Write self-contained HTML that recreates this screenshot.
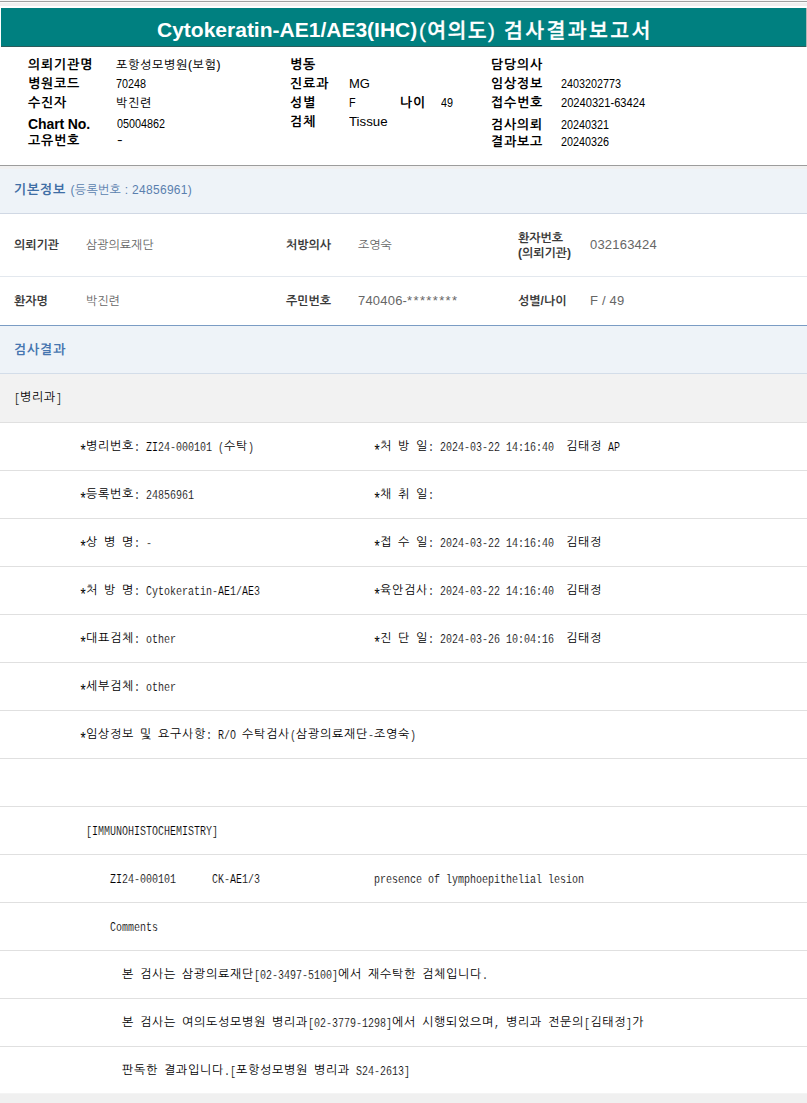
<!DOCTYPE html>
<html lang="ko">
<head>
<meta charset="utf-8">
<title>검사결과보고서</title>
<style>
html,body{margin:0;padding:0;}
body{width:807px;height:1103px;position:relative;overflow:hidden;background:#f0f0f0;font-family:"Liberation Sans","NanumGothic","Noto Sans CJK KR",sans-serif;}
#topline{position:absolute;left:0;top:0;width:807px;height:1px;background:#f6f6f6;}
#topline2{position:absolute;left:0;top:1px;width:807px;height:1px;background:#a0a0a0;}
#topline3{position:absolute;left:0;top:2px;width:807px;height:1px;background:#fafafa;}
#topw{position:absolute;left:0;top:6px;width:807px;height:42px;background:#fff;}
#redge{position:absolute;left:806px;top:8px;width:1px;height:39px;background:#b4b4b4;}
#hdr{position:absolute;left:1px;top:8px;width:805px;height:38px;background:#008080;border-bottom:1px solid #2c5c5c;color:#fff;text-align:center;font-weight:bold;font-size:22px;line-height:38px;white-space:nowrap;font-family:"Liberation Sans","Noto Sans CJK KR",sans-serif;}
#hdr span{position:absolute;top:0;}
#hdr .k1,#hdr .k2{font-weight:500;-webkit-text-stroke:.3px #fff;}
#hdr .e{left:156px;font-size:21px;top:3px;}
#hdr .k1{left:418px;font-size:20.5px;letter-spacing:1.4px;top:4px;}
#hdr .k2{left:503px;font-size:20.5px;letter-spacing:2.4px;top:4px;}
#info{position:absolute;left:0;top:47px;width:807px;height:118px;background:#fff;border-bottom:1px solid #9c9c9c;}
#info div{position:absolute;white-space:nowrap;line-height:16px;height:16px;color:#000;}
#info .l{font-weight:bold;font-size:13px;letter-spacing:.8px;}
#info .v{font-size:13px;transform:scaleX(.83);transform-origin:0 0;}
#info .v.k{font-size:12px;letter-spacing:.7px;transform:none;-webkit-text-stroke:.1px #000;}
.sec{position:absolute;left:0;width:807px;background:#eef3f8;}
.sec b{position:absolute;left:14px;font-size:13px;color:#3e6ea5;white-space:nowrap;letter-spacing:.8px;}
.sec span{font-weight:normal;font-size:12px;color:#5a7fae;letter-spacing:.3px;}
.row{position:absolute;left:0;width:807px;background:#fff;}
.row div{position:absolute;white-space:nowrap;font-size:12px;}
.row .l{font-weight:bold;color:#3a3a3a;}
.row .v{color:#666;}
.row .n{font-size:13px;letter-spacing:.2px;margin-top:-1px;}
.m{position:absolute;left:0;width:807px;height:47px;background:#fff;border-bottom:1px solid #e0e0e0;}
.m div{position:absolute;top:0;line-height:47px;white-space:pre;font-size:12px;letter-spacing:.72px;color:#000;font-family:"NanumGothic","Noto Sans CJK KR",sans-serif;}
.m .a{display:inline-block;font-family:"Liberation Mono","DejaVu Sans Mono",monospace;font-size:13px;letter-spacing:0;transform:scaleX(.769);transform-origin:0 50%;white-space:pre;line-height:16px;position:relative;top:1px;-webkit-text-stroke:.15px #fff;}
.m .s{font-size:17px;transform:scaleX(.8);top:6px;left:-1px;-webkit-text-stroke:0;}
</style>
</head>
<body>
<div id="topline"></div><div id="topline2"></div><div id="topline3"></div><div id="topw"></div><div id="redge"></div>
<div id="hdr"><span class="e">Cytokeratin-AE1/AE3(IHC)</span><span class="k1">(여의도)</span> <span class="k2">검사결과보고서</span></div>
<div id="info">
<div class="l" style="left:28px;top:10px">의뢰기관명</div><div class="v k" style="left:116px;top:10px">포항성모병원(보험)</div>
<div class="l" style="left:28px;top:29px">병원코드</div><div class="v" style="left:116px;top:29px">70248</div>
<div class="l" style="left:28px;top:48px">수진자</div><div class="v k" style="left:116px;top:48px">박진련</div>
<div class="l" style="left:28px;top:69px;font-size:14px;letter-spacing:-.1px">Chart No.</div><div class="v" style="left:117px;top:69px">05004862</div>
<div class="l" style="left:28px;top:86px">고유번호</div><div class="v" style="left:117px;top:85px;transform:scaleX(1.3)">-</div>
<div class="l" style="left:290px;top:10px">병동</div>
<div class="l" style="left:290px;top:29px">진료과</div><div class="v" style="left:349px;top:29px;transform:none">MG</div>
<div class="l" style="left:290px;top:48px">성별</div><div class="v" style="left:349px;top:48px">F</div>
<div class="l" style="left:400px;top:48px">나이</div><div class="v" style="left:441px;top:48px">49</div>
<div class="l" style="left:290px;top:67px">검체</div><div class="v" style="left:349px;top:67px;transform:scaleX(1.02)">Tissue</div>
<div class="l" style="left:491px;top:10px">담당의사</div>
<div class="l" style="left:491px;top:29px">임상정보</div><div class="v" style="left:561px;top:29px">2403202773</div>
<div class="l" style="left:491px;top:48px">접수번호</div><div class="v" style="left:561px;top:48px;transform:scaleX(.855)">20240321-63424</div>
<div class="l" style="left:491px;top:70px">검사의뢰</div><div class="v" style="left:561px;top:70px">20240321</div>
<div class="l" style="left:491px;top:87px">결과보고</div><div class="v" style="left:561px;top:87px">20240326</div>
</div>
<div class="sec" style="top:169px;height:44px;border-bottom:1px solid #d0d8e4"><b style="top:13px">기본정보 <span>(등록번호 : 24856961)</span></b></div>
<div class="row" style="top:214px;height:62px;border-bottom:1px solid #e3e8ee">
<div class="l" style="left:14px;top:24px">의뢰기관</div><div class="v" style="left:86px;top:24px">삼광의료재단</div>
<div class="l" style="left:286px;top:24px">처방의사</div><div class="v" style="left:358px;top:24px">조영숙</div>
<div class="l" style="left:518px;top:17px;line-height:15px">환자번호<br>(의뢰기관)</div><div class="v n" style="left:590px;top:24px">032163424</div>
</div>
<div class="row" style="top:277px;height:48px;border-bottom:1px solid #7a9cc4">
<div class="l" style="left:14px;top:17px">환자명</div><div class="v" style="left:86px;top:17px">박진련</div>
<div class="l" style="left:286px;top:17px">주민번호</div><div class="v n" style="left:358px;top:17px">740406-<span style="letter-spacing:1.35px">********</span></div>
<div class="l" style="left:518px;top:17px">성별/나이</div><div class="v n" style="left:590px;top:17px">F / 49</div>
</div>
<div class="sec" style="top:326px;height:47px;border-bottom:1px solid #d3dde9"><b style="top:16px;color:#4676b0">검사결과</b></div>
<div class="m" style="top:374px;height:48px;background:#f2f2f2"><div style="left:14px;line-height:46px"><span class="a" style="width:6px">[</span>병리과<span class="a" style="width:6px">]</span></div></div>
<div class="m" style="top:423px"><div style="left:80px"><span class="a s" style="width:6px">*</span>병리번호<span class="a" style="width:90px">: ZI24-000101 (</span>수탁<span class="a" style="width:6px">)</span></div><div style="left:374px"><span class="a s" style="width:6px">*</span>처<span class="a" style="width:6px"> </span>방<span class="a" style="width:6px"> </span>일<span class="a" style="width:138px">: 2024-03-22 14:16:40  </span>김태정<span class="a" style="width:18px"> AP</span></div></div>
<div class="m" style="top:471px"><div style="left:80px"><span class="a s" style="width:6px">*</span>등록번호<span class="a" style="width:60px">: 24856961</span></div><div style="left:374px"><span class="a s" style="width:6px">*</span>채<span class="a" style="width:6px"> </span>취<span class="a" style="width:6px"> </span>일<span class="a" style="width:6px">:</span></div></div>
<div class="m" style="top:519px"><div style="left:80px"><span class="a s" style="width:6px">*</span>상<span class="a" style="width:6px"> </span>병<span class="a" style="width:6px"> </span>명<span class="a" style="width:18px">: -</span></div><div style="left:374px"><span class="a s" style="width:6px">*</span>접<span class="a" style="width:6px"> </span>수<span class="a" style="width:6px"> </span>일<span class="a" style="width:138px">: 2024-03-22 14:16:40  </span>김태정</div></div>
<div class="m" style="top:567px"><div style="left:80px"><span class="a s" style="width:6px">*</span>처<span class="a" style="width:6px"> </span>방<span class="a" style="width:6px"> </span>명<span class="a" style="width:126px">: Cytokeratin-AE1/AE3</span></div><div style="left:374px"><span class="a s" style="width:6px">*</span>육안검사<span class="a" style="width:138px">: 2024-03-22 14:16:40  </span>김태정</div></div>
<div class="m" style="top:615px"><div style="left:80px"><span class="a s" style="width:6px">*</span>대표검체<span class="a" style="width:42px">: other</span></div><div style="left:374px"><span class="a s" style="width:6px">*</span>진<span class="a" style="width:6px"> </span>단<span class="a" style="width:6px"> </span>일<span class="a" style="width:138px">: 2024-03-26 10:04:16  </span>김태정</div></div>
<div class="m" style="top:663px"><div style="left:80px"><span class="a s" style="width:6px">*</span>세부검체<span class="a" style="width:42px">: other</span></div></div>
<div class="m" style="top:711px"><div style="left:80px"><span class="a s" style="width:6px">*</span>임상정보<span class="a" style="width:6px"> </span>및<span class="a" style="width:6px"> </span>요구사항<span class="a" style="width:36px">: R/O </span>수탁검사<span class="a" style="width:6px">(</span>삼광의료재단<span class="a" style="width:6px">-</span>조영숙<span class="a" style="width:6px">)</span></div></div>
<div class="m" style="top:759px"></div>
<div class="m" style="top:807px"><div style="left:86px"><span class="a" style="width:132px">[IMMUNOHISTOCHEMISTRY]</span></div></div>
<div class="m" style="top:855px"><div style="left:110px"><span class="a" style="width:66px">ZI24-000101</span></div><div style="left:212px"><span class="a" style="width:48px">CK-AE1/3</span></div><div style="left:374px"><span class="a" style="width:210px">presence of lymphoepithelial lesion</span></div></div>
<div class="m" style="top:903px"><div style="left:110px"><span class="a" style="width:48px">Comments</span></div></div>
<div class="m" style="top:951px"><div style="left:122px">본<span class="a" style="width:6px"> </span>검사는<span class="a" style="width:6px"> </span>삼광의료재단<span class="a" style="width:84px">[02-3497-5100]</span>에서<span class="a" style="width:6px"> </span>재수탁한<span class="a" style="width:6px"> </span>검체입니다<span class="a" style="width:6px">.</span></div></div>
<div class="m" style="top:999px"><div style="left:122px">본<span class="a" style="width:6px"> </span>검사는<span class="a" style="width:6px"> </span>여의도성모병원<span class="a" style="width:6px"> </span>병리과<span class="a" style="width:84px">[02-3779-1298]</span>에서<span class="a" style="width:6px"> </span>시행되었으며<span class="a" style="width:12px">, </span>병리과<span class="a" style="width:6px"> </span>전문의<span class="a" style="width:6px">[</span>김태정<span class="a" style="width:6px">]</span>가</div></div>
<div class="m" style="top:1047px;height:46px;border-bottom-color:#f4f4f4"><div style="left:122px">판독한<span class="a" style="width:6px"> </span>결과입니다<span class="a" style="width:12px">.[</span>포항성모병원<span class="a" style="width:6px"> </span>병리과<span class="a" style="width:60px"> S24-2613]</span></div></div>
</body>
</html>
